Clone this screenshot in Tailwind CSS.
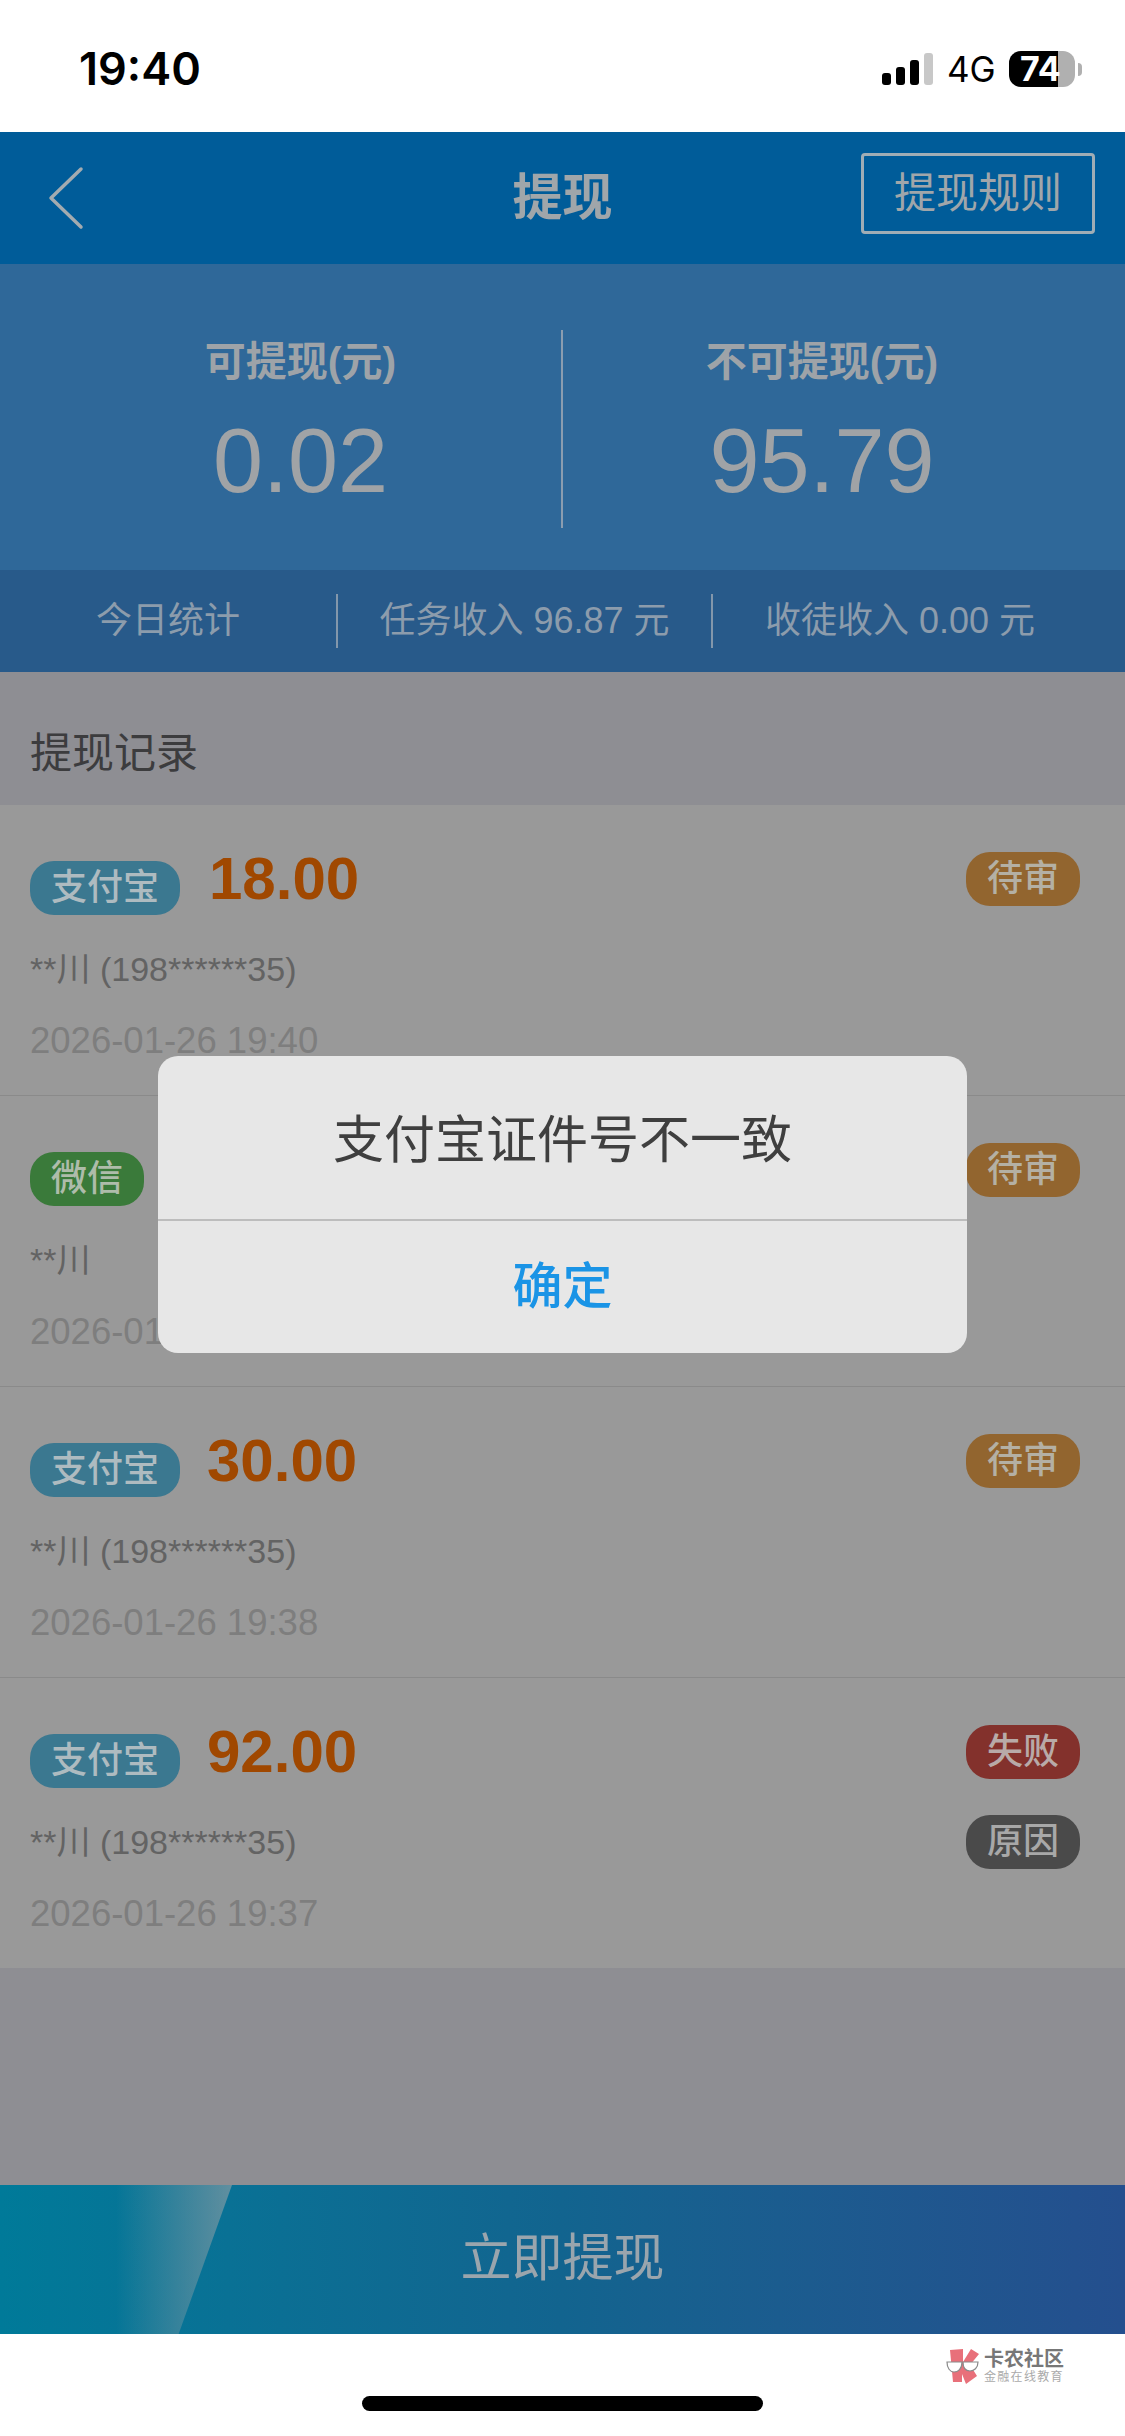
<!doctype html>
<html lang="zh-CN">
<head>
    <meta charset="UTF-8" />
    <meta name="viewport" content="width=device-width, initial-scale=1.0" />
    <title>提现</title>
    <script src="https://cdn.jsdelivr.net/npm/@tailwindcss/browser@4"></script>
</head>
<body class="bg-white font-['Liberation_Sans','Noto_Sans_CJK_SC',sans-serif]">
<div class="relative w-[1125px] h-[2436px] overflow-hidden flex flex-col">

    <!-- status bar -->
    <div class="h-[132px] shrink-0 bg-white flex items-start justify-between">
        <span class="ml-[79px] mt-[42px] text-[45px] leading-[54px] font-semibold text-black font-['Inter',sans-serif]">19:40</span>
        <div class="flex items-end mt-[51px] mr-[43px] h-[36px]">
            <div class="flex items-end gap-[5px] h-[32px] mb-[2px]">
                <div class="w-[9px] h-[12px] rounded-[3px] bg-black"></div>
                <div class="w-[9px] h-[18px] rounded-[3px] bg-black"></div>
                <div class="w-[9px] h-[25px] rounded-[3px] bg-black"></div>
                <div class="w-[9px] h-[32px] rounded-[3px] bg-[#c8c8c8]"></div>
            </div>
            <span class="ml-[14px] w-[48px] h-[36px] text-[35px] leading-[36px] font-normal text-black font-['Inter',sans-serif]">4G</span>
            <div class="relative ml-[14px] w-[66px] h-[36px] flex">
                <div class="w-[49px] rounded-l-[12px] bg-black"></div>
                <div class="flex-1 rounded-r-[12px] bg-[#b0b0b0]"></div>
                <span class="absolute left-[11px] top-0 text-[34px] leading-[36px] font-bold text-white font-['Inter',sans-serif]">74</span>
            </div>
            <div class="ml-[3px] mb-[11px] w-[4px] h-[13px] rounded-r-full bg-[#b0b0b0]"></div>
        </div>
    </div>

    <!-- header -->
    <div class="h-[132px] shrink-0 bg-[#005c99] grid grid-cols-[1fr_auto_1fr] items-center">
        <div class="pl-[48px]">
            <svg class="w-[36px] h-[64px]" viewBox="0 0 36 64" fill="none" stroke="#a3abb0" stroke-width="3.5" stroke-linecap="round" stroke-linejoin="round">
                <path d="M33 3 L3 32 L33 61" />
            </svg>
        </div>
        <span class="text-[50px] leading-[60px] font-bold text-[#a0a6aa]">提现</span>
        <div class="flex justify-end pr-[30px] -mt-[9px]">
            <div class="w-[234px] h-[81px] rounded-[4px] border-[3px] border-[#a0adb5] flex items-center justify-center text-[42px] text-[#a0a6aa]">提现规则</div>
        </div>
    </div>

    <!-- balances -->
    <div class="h-[306px] shrink-0 bg-[#2f6899] pt-[66px] flex items-start">
        <div class="w-[563px] h-[198px] pl-[40px] border-r-2 border-[#8b9db0] flex flex-col items-center">
            <span class="h-[64px] text-[41px] leading-[64px] font-bold text-[#9ea3a8]">可提现(元)</span>
            <span class="mt-[17px] h-[100px] text-[90px] leading-[100px] text-[#a0a3a6]">0.02</span>
        </div>
        <div class="flex-1 h-[198px] pr-[44px] flex flex-col items-center">
            <span class="h-[64px] text-[41px] leading-[64px] font-bold text-[#9ea3a8]">不可提现(元)</span>
            <span class="mt-[17px] h-[100px] text-[90px] leading-[100px] text-[#a0a3a6]">95.79</span>
        </div>
    </div>

    <!-- today -->
    <div class="h-[102px] shrink-0 bg-[#285a8a] flex items-center text-[36px] text-[#8c9cac]">
        <div class="w-[338px] h-[54px] leading-[54px] text-center border-r-2 border-[#8397ab]">今日统计</div>
        <div class="w-[375px] h-[54px] leading-[54px] text-center border-r-2 border-[#8397ab]">任务收入 96.87 元</div>
        <div class="flex-1 h-[54px] leading-[54px] text-center pr-[38px]">收徒收入 0.00 元</div>
    </div>

    <!-- records -->
    <div class="flex-1 bg-[#8e8e93] flex flex-col">
        <div class="h-[133px] shrink-0 pl-[30px] pt-[30px] flex items-center text-[42px] text-[#3c3c3e]">提现记录</div>

        <div class="h-[291px] shrink-0 bg-[#999999] border-b border-[#8a8a8a] px-[30px] pr-[45px] pt-[47px] flex justify-between">
            <div class="flex flex-col">
                <div class="flex items-start">
                    <span class="mt-[9px] w-[150px] h-[54px] rounded-[24px] bg-[#3b7890] text-[36px] leading-[54px] font-medium text-center text-[#aebbc0]">支付宝</span>
                    <span class="ml-[29px] h-[54px] text-[60px] leading-[54px] font-bold text-[#a04800]">18.00</span>
                </div>
                <span class="mt-[27px] h-[54px] text-[34px] leading-[54px] text-[#636363]">**川 (198******35)</span>
                <span class="mt-[18px] h-[54px] text-[36.5px] leading-[54px] text-[#7e7e7e]">2026-01-26 19:40</span>
            </div>
            <span class="w-[114px] h-[54px] rounded-[24px] bg-[#92652f] text-[36px] leading-[54px] font-medium text-center text-[#b4b0a4]">待审</span>
        </div>

        <div class="h-[291px] shrink-0 bg-[#999999] border-b border-[#8a8a8a] px-[30px] pr-[45px] pt-[47px] flex justify-between">
            <div class="flex flex-col">
                <div class="flex items-start">
                    <span class="mt-[9px] w-[114px] h-[54px] rounded-[24px] bg-[#3a7a3a] text-[36px] leading-[54px] font-medium text-center text-[#aebcaa]">微信</span>
                </div>
                <span class="mt-[27px] h-[54px] text-[34px] leading-[54px] text-[#636363]">**川</span>
                <span class="mt-[18px] h-[54px] text-[36.5px] leading-[54px] text-[#7e7e7e]">2026-01</span>
            </div>
            <span class="w-[114px] h-[54px] rounded-[24px] bg-[#92652f] text-[36px] leading-[54px] font-medium text-center text-[#b4b0a4]">待审</span>
        </div>

        <div class="h-[291px] shrink-0 bg-[#999999] border-b border-[#8a8a8a] px-[30px] pr-[45px] pt-[47px] flex justify-between">
            <div class="flex flex-col">
                <div class="flex items-start">
                    <span class="mt-[9px] w-[150px] h-[54px] rounded-[24px] bg-[#3b7890] text-[36px] leading-[54px] font-medium text-center text-[#aebbc0]">支付宝</span>
                    <span class="ml-[27px] h-[54px] text-[60px] leading-[54px] font-bold text-[#a04800]">30.00</span>
                </div>
                <span class="mt-[27px] h-[54px] text-[34px] leading-[54px] text-[#636363]">**川 (198******35)</span>
                <span class="mt-[18px] h-[54px] text-[36.5px] leading-[54px] text-[#7e7e7e]">2026-01-26 19:38</span>
            </div>
            <span class="w-[114px] h-[54px] rounded-[24px] bg-[#92652f] text-[36px] leading-[54px] font-medium text-center text-[#b4b0a4]">待审</span>
        </div>

        <div class="h-[290px] shrink-0 bg-[#999999] px-[30px] pr-[45px] pt-[47px] flex justify-between">
            <div class="flex flex-col">
                <div class="flex items-start">
                    <span class="mt-[9px] w-[150px] h-[54px] rounded-[24px] bg-[#3b7890] text-[36px] leading-[54px] font-medium text-center text-[#aebbc0]">支付宝</span>
                    <span class="ml-[27px] h-[54px] text-[60px] leading-[54px] font-bold text-[#a04800]">92.00</span>
                </div>
                <span class="mt-[27px] h-[54px] text-[34px] leading-[54px] text-[#636363]">**川 (198******35)</span>
                <span class="mt-[18px] h-[54px] text-[36.5px] leading-[54px] text-[#7e7e7e]">2026-01-26 19:37</span>
            </div>
            <div class="flex flex-col gap-[36px]">
                <span class="w-[114px] h-[54px] rounded-[24px] bg-[#83312c] text-[36px] leading-[54px] font-medium text-center text-[#b8aaa8]">失败</span>
                <span class="w-[114px] h-[54px] rounded-[24px] bg-[#4a4a4a] text-[36px] leading-[54px] font-medium text-center text-[#a8a8a8]">原因</span>
            </div>
        </div>
    </div>

    <!-- submit bar -->
    <div class="relative h-[149px] shrink-0 bg-linear-to-r from-[#007a99] via-[#12648f] to-[#244f8e] flex items-center justify-center text-[51px] text-[#9aa5ad]">
        <div class="absolute left-0 top-0 w-[232px] h-full bg-linear-to-r from-transparent from-[50%] to-[#a8a8a8]/55 [clip-path:polygon(0_0,100%_0,77%_100%,0_100%)]"></div>
        <span class="relative">立即提现</span>
    </div>

    <!-- bottom strip -->
    <div class="h-[102px] shrink-0 bg-white flex flex-col items-center">
        <div class="self-end mr-[61px] mt-[14px] h-[37px] flex items-start">
            <svg class="w-[34px] h-[37px]" viewBox="0 0 34 37">
                <path d="M4 2 L17 1 V14 L25 1 L33 6 L24 17 L31 28 L20 36 L16 26 V34 L7 34 Z" fill="#e8707a" />
                <path d="M1 14 H16 C16 21 12 24 8 24 C4 24 1 20 1 14 Z" fill="#ffffff" stroke="#8a8a8a" stroke-width="1.2" />
                <path d="M17 14 H32 C32 20 28 23 24 23 C20 23 17 20 17 14 Z" fill="#ffffff" stroke="#8a8a8a" stroke-width="1.2" />
            </svg>
            <div class="ml-[4px] flex flex-col">
                <span class="h-[22px] text-[20px] leading-[22px] font-bold text-[#777777]">卡农社区</span>
                <span class="h-[15px] text-[12px] leading-[15px] tracking-[1.3px] text-[#aaaaaa]">金融在线教育</span>
            </div>
        </div>
        <div class="mt-[11px] w-[401px] h-[15px] rounded-full bg-black"></div>
    </div>

    <!-- alert -->
    <div class="absolute left-[158px] top-[1056px] w-[809px] h-[297px] rounded-[20px] bg-[#e7e7e7] flex flex-col">
        <div class="h-[165px] pt-[7px] border-b-2 border-[#bdbdbd] flex items-center justify-center text-[51px] text-[#3f3f3f]">支付宝证件号不一致</div>
        <div class="flex-1 flex items-center justify-center text-[50px] font-medium text-[#1a94e6]">确定</div>
    </div>
</div>
</body>
</html>
